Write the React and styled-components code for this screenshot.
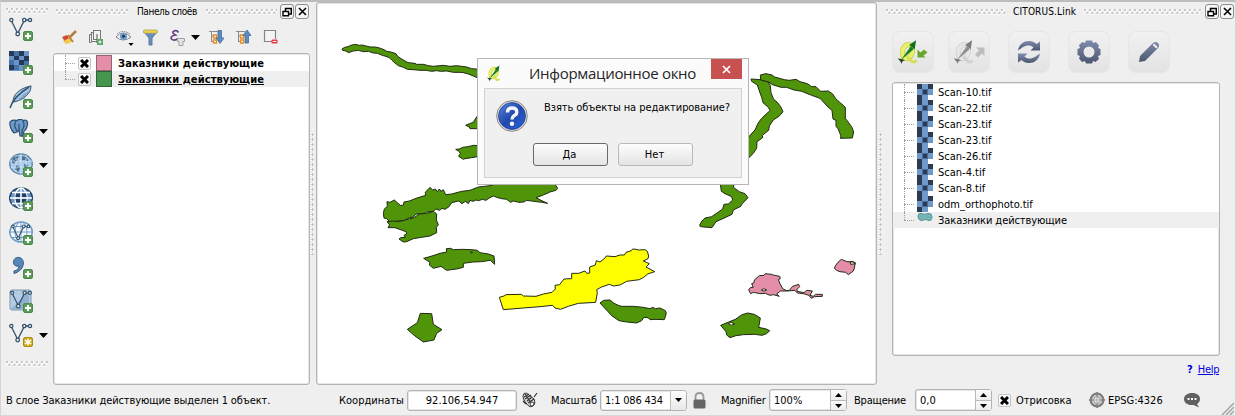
import React from "react";
import styled, { createGlobalStyle, css } from "styled-components";

const GlobalStyle = createGlobalStyle`
  * { box-sizing: border-box; }
  body { margin: 0; }
`;

/* ---------- primitives ---------- */

const Text = styled.span`
  font-size: ${(p) => p.$size || 11}px;
  font-weight: ${(p) => (p.$bold ? 700 : 400)};
  letter-spacing: ${(p) => p.$track || 0}px;
  text-decoration: ${(p) => (p.$underline ? "underline" : "none")};
  line-height: 16px;
  white-space: nowrap;
`;

const Grip = styled.div`
  flex: none;
  ${(p) =>
    p.$vertical
      ? css`
          width: 5px;
          height: ${p.$length}px;
          background-image: radial-gradient(circle at 1.5px 1.5px, #c2c2c2 1.1px, #fff 1.3px 1.9px, transparent 2px);
          background-size: 5px 5px;
        `
      : css`
          width: ${p.$length}px;
          height: 6px;
          background-image: radial-gradient(circle at 1px 1px, #c6c6c6 1px, #fff 1.2px 1.8px, transparent 2px),
            radial-gradient(circle at 1px 1px, #c6c6c6 1px, #fff 1.2px 1.8px, transparent 2px);
          background-size: 5px 6px;
          background-position: 0 0, 2.5px 3px;
        `}
`;

const Box = styled.div`
  background: #fff;
  border: 1px solid #b4b4b4;
  border-radius: 3px;
  box-shadow: inset 0 0 0 0.5px #cfcfcf;
`;

const Check = styled.span`
  display: grid;
  place-items: center;
  width: 13px;
  height: 13px;
  flex: none;
  background: linear-gradient(#fff, #f4f4f4);
  border: 1px solid #c3c3c3;
  border-radius: 2px;
`;

/* ---------- page ---------- */

const Window = styled.div`
  position: relative;
  display: flex;
  flex-direction: column;
  width: 1236px;
  height: 416px;
  overflow: hidden;
  background: #efefef;
  border-top: 2px solid #bdbdbd;
  border-left: 1px solid #d4d4d4;
  border-right: 1px solid #d4d4d4;
  border-bottom: 1px solid #d8d8d8;
  color: #000;
  font-family: "DejaVu Sans Condensed", "DejaVu Sans", sans-serif;
`;

const Workspace = styled.div`
  display: flex;
  height: 383px;
  flex: none;
`;

const SideBar = styled.div`
  width: 52px;
  padding: 6px 0 0 5px;
`;

const SideItem = styled.div`
  display: flex;
  align-items: center;
  height: 34px;
  padding-left: 3px;
  gap: 5px;
`;

const SideTools = styled.div`
  margin: -2px 0 9px;
`;

const LayersPanel = styled.div`
  display: flex;
  flex-direction: column;
  width: 257px;
`;

const PanelTitle = styled.div`
  display: flex;
  align-items: center;
  height: 19px;
  padding-left: ${(p) => p.$left}px;
`;

const TitleText = styled(Text)`
  width: ${(p) => p.$width}px;
  margin: 0 ${(p) => p.$gap}px;
  padding-top: 1px;
`;

const TitleButton = styled.div`
  display: grid;
  place-items: center;
  width: 14px;
  height: 15px;
  margin-left: ${(p) => p.$gap}px;
  border: 1px solid #8d8d8d;
  border-radius: 3px;
  background: #f6f6f6;
`;

const LayerTools = styled.div`
  display: flex;
  align-items: center;
  height: 32px;
  padding: 3px 0 0 9px;
`;

const ToolSlot = styled.div`
  width: ${(p) => p.$width || 27}px;
  height: 20px;
  flex: none;
`;

const LayerList = styled(Box)`
  flex: 1;
  padding-top: 1px;
`;

const LayerRow = styled.div`
  display: flex;
  align-items: center;
  height: 16px;
  background: ${(p) => (p.$active ? "#efefef" : "#fff")};
`;

const RowText = styled(Text)`
  padding-top: 2px;
`;

const Branch = styled.span`
  position: relative;
  width: ${(p) => p.$width}px;
  height: 16px;
  margin: 0 3px 0 ${(p) => p.$left}px;
  &::before {
    content: "";
    position: absolute;
    inset: 0 auto ${(p) => (p.$last ? "8px" : "0")} 0;
    border-left: 1px dotted #a0a0a0;
  }
  &::after {
    content: "";
    position: absolute;
    left: 0;
    top: 8px;
    width: ${(p) => p.$width}px;
    border-top: 1px dotted #a0a0a0;
  }
`;

const Swatch = styled.span`
  width: 16px;
  height: 16px;
  margin: 0 6px 0 5px;
  background: ${(p) => p.$color};
  border: 1px solid ${(p) => p.$edge};
`;

const Splitter = styled.div`
  display: flex;
  align-items: center;
  justify-content: center;
  width: ${(p) => p.$width}px;
`;

const MapFrame = styled(Box)`
  width: 561px;
  height: 383px;
  overflow: hidden;
`;

const LinkPanel = styled.div`
  display: flex;
  flex-direction: column;
  flex: 1;
`;

const LinkButtons = styled.div`
  display: flex;
  gap: 18px;
  padding: 10px 0 9px 7px;
`;

const LinkButton = styled.div`
  display: grid;
  place-items: center;
  width: 42px;
  height: 42px;
  margin-right: ${(p) => (p.$tight ? -4 : 0)}px;
  border: 1px solid #e6e6e6;
  border-radius: 8px;
  background: linear-gradient(#f1f1f1, #e3e3e3);
`;

const FileList = styled(Box)`
  width: 328px;
  height: 274px;
  margin-left: 7px;
  padding-top: 1px;
`;

const FileRow = styled.div`
  display: flex;
  align-items: center;
  height: 16px;
  background: ${(p) => (p.$active ? "#efefef" : "#fff")};
`;

const FileIcon = styled.span`
  width: 16px;
  height: 16px;
  margin-right: 5px;
`;

const HelpLine = styled.div`
  display: flex;
  gap: 5px;
  padding: 6px 0 0 302px;
  color: #0000e6;
`;

/* ---------- status bar ---------- */

const StatusBar = styled.div`
  display: flex;
  align-items: center;
  height: 30px;
  padding-left: 5px;
`;

const StatusText = styled(Text)`
  width: ${(p) => p.$width}px;
  padding-top: 1px;
  flex: none;
`;

const Field = styled(Box)`
  display: flex;
  align-items: center;
  justify-content: ${(p) => (p.$center ? "center" : "flex-start")};
  width: ${(p) => p.$width}px;
  height: ${(p) => p.$height || 21}px;
  margin-right: ${(p) => p.$after}px;
  padding-left: ${(p) => (p.$center ? 0 : 4)}px;
  flex: none;
`;

const FieldValue = styled(Text)`
  flex: ${(p) => (p.$grow ? 1 : "none")};
  padding-top: 2px;
`;

const DropButton = styled.span`
  display: grid;
  place-items: center;
  width: 16px;
  height: 19px;
  border-left: 1px solid #bdbdbd;
  background: linear-gradient(#fdfdfd, #e9e9e9);
  border-radius: 0 2px 2px 0;
`;

const Stepper = styled.span`
  display: grid;
  grid-template-rows: 1fr 1fr;
  width: 16px;
  height: 20px;
  border-left: 1px solid #b8b8b8;
`;

const Step = styled.span`
  display: grid;
  place-items: center;
  background: linear-gradient(#fbfbfb, #ececec);
  & + & {
    border-top: 1px solid #b8b8b8;
  }
`;

const StatusIcon = styled.span`
  display: flex;
  width: ${(p) => p.$width}px;
  flex: none;
`;

const SizeGrip = styled.div`
  align-self: flex-end;
  display: flex;
  margin: 0 0 0 20px;
`;

/* ---------- dialog ---------- */

const Dialog = styled.div`
  position: absolute;
  left: 476px;
  top: 56px;
  width: 272px;
  height: 127px;
  padding: 0 6px;
  background: #fbfbfb;
  border: 1px solid #b6b6b6;
`;

const DialogHead = styled.div`
  display: flex;
  align-items: flex-start;
  height: 29px;
  padding-left: 4px;
`;

const DialogTitle = styled.span`
  width: 182px;
  margin: 4px 0 0 26px;
  color: #262626;
  font: 15px/20px "Open Sans", "Noto Sans", sans-serif;
  letter-spacing: -0.3px;
  white-space: nowrap;
`;

const DialogIcon = styled.span`
  width: 15px;
  margin-top: 6px;
`;

const CloseButton = styled.span`
  display: grid;
  place-items: center;
  width: 31px;
  height: 20px;
  background: #c75050;
`;

const DialogBody = styled.div`
  display: grid;
  grid-template-columns: 32px 1fr;
  grid-template-rows: 43px 24px;
  column-gap: 16px;
  height: 90px;
  padding: 11px 11px 0;
  background: #f0f0f0;
  border: 1px solid #d2d2d2;
`;

const DialogButtons = styled.div`
  grid-column: 1 / 3;
  display: flex;
  gap: 10px;
  padding-left: 37px;
`;

const PushButton = styled.span`
  display: grid;
  place-items: center;
  width: 75px;
  height: 23px;
  padding: 1px 2px 0 0;
  border: 1px solid ${(p) => (p.$default ? "#6a6a6a" : "#b9b9b9")};
  border-radius: 3px;
  background: linear-gradient(#fdfdfd, #e4e4e4);
`;

/* ---------- icons ---------- */

const Arrow = ({ up, w = 9, h = 5 }) => (
  <svg width={w} height={h} viewBox="0 0 10 6" preserveAspectRatio="none">
    <path d={up ? "M0 6L5 0L10 6Z" : "M0 0L5 6L10 0Z"} fill="#000" />
  </svg>
);

const Cross = () => (
  <svg width="9" height="9" viewBox="0 0 9 9">
    <path d="M1 1L8 8M8 1L1 8" stroke="#000" strokeWidth="3" />
  </svg>
);

const Plus = () => (
  <g>
    <rect x="14.5" y="14.5" width="9" height="9" rx="1.5" fill="#5c9c58" stroke="#4a8a4b" />
    <path d="M19 16v6M16 19h6" stroke="#fff" strokeWidth="2" />
  </g>
);

const Nodes = () => (
  <g fill="#f2f5f8" stroke="#34526b" strokeWidth="1.3">
    <path d="M2.5 4L8.7 16.5L15.5 3H21" fill="none" />
    <circle cx="2.3" cy="3" r="1.6" />
    <circle cx="8.7" cy="17" r="1.8" />
    <circle cx="15.3" cy="3" r="1.7" />
    <circle cx="21" cy="3" r="1.6" />
  </g>
);

const sideIcons = {
  vector: <Nodes />,
  raster: (
    <g>
      <rect width="20" height="20" fill="#6b95c8" />
      <path d="M0 0h5v5H0zM10 0h5v5h-5zM5 5h5v4H5zM15 5h5v5h-5zM10 9h5v5h-5zM0 14h5v5H0z" fill="#223a58" />
      <path d="M5 0h5v5H5zM0 9h5v5H0zM5 14h5v5H5zM15 10h5v5h-5z" fill="#4672a8" />
    </g>
  ),
  feather: (
    <g stroke="#34566f" strokeWidth="1">
      <path d="M4 17C4 10 9 4 22 .8C22 6 20 8 17 11C14 14 9 16 5 17Z" fill="#a5c5e5" />
      <path d="M1 23C3 16 9 9 20 2" fill="none" strokeWidth="1.5" />
      <path d="M10 14l8-4M13 11l7-4M8 16l8-3" fill="none" stroke="#5d87ad" strokeWidth=".7" />
    </g>
  ),
  elephant: (
    <g stroke="#2c4f70" strokeWidth="1.2" strokeLinejoin="round">
      <path d="M1 3C3 0 6 1 8 1.5C10 0 13 .5 14.5 1.5C17 .5 19 2 18.500 5C18 9 17 11 15 12L14 17H11L10 11L8 13L5 14C2 11 .3 6 1 3Z" fill="#6d9bc9" />
      <path d="M7 2C5 5 6 9 8 12M14 2C16 5 15 9 13 11V18M10 5v6" fill="none" />
    </g>
  ),
  earth: (
    <g>
      <ellipse cx="12" cy="11" rx="11.300" ry="10" fill="#a9cbe9" stroke="#5f87ae" strokeWidth="1.300" />
      <path d="M4 5l4-2 2 1-2 2 1 2-3 1-1 2-2-2zM13 3l4 1 3 4-3 0-1-1-3 1zM7 12l3 1 1 3-2 3-3-3zM15 11l4 1-1 3-3-1z" fill="#4d6f8e" />
      <path d="M1 8h22M2 14h20M12 1v20M7 2v18M17 2v18" stroke="#e4f0fa" strokeWidth=".8" strokeDasharray="2 1" />
    </g>
  ),
  globe: (
    <g fill="none">
      <ellipse cx="12" cy="11" rx="11.300" ry="10" fill="#6896c8" stroke="#284868" strokeWidth="1.600" />
      <path d="M3 5.500h18M1 11h22M3 16.500h18M12 1v20" stroke="#fff" strokeWidth="1.300" />
      <ellipse cx="12" cy="11" rx="6" ry="10" stroke="#fff" strokeWidth="1.300" />
      <path d="M7 6.500h4V10H6.300zM13 6.500h4l.7 3.500H13zM6.500 12H11v3.500H7.300zM13 12h4.500l-.8 3.500H13z" fill="#243f60" />
    </g>
  ),
  wfs: (
    <g>
      <g fill="#f4f8fb" stroke="#6d9cc8" strokeWidth="1">
        <ellipse cx="12" cy="11" rx="11.300" ry="10" strokeWidth="1.500" />
        <ellipse cx="12" cy="11" rx="6" ry="10" />
        <path d="M1 11h22M3 5.500h18M3 16.500h18M12 1v20" fill="none" />
      </g>
      <g transform="translate(2 3) scale(.83)"><Nodes /></g>
    </g>
  ),
  comma: (
    <path d="M5 16C9 15 10 13 10 11C6 12 4 9 4.500 6.500C5 3 8 2 10 2.500C14 3 15 7 14 10.500C13 14 10 17 5 18.500Z" fill="#5787b8" stroke="#31557a" />
  ),
  vfile: (
    <g>
      <rect x="1" y="1" width="21" height="20" rx="2" fill="#b5cde4" stroke="#7f98b0" />
      <path d="M2 20L20 2V20Z" fill="#8fb0d0" />
      <g transform="translate(1 1) scale(.95)"><Nodes /></g>
    </g>
  ),
  vnew: <Nodes />,
};

const NewBadge = () => (
  <g>
    <rect x="14.500" y="14.500" width="9" height="9" rx="1.500" fill="#d3ab16" stroke="#ab8a16" />
    <path d="M19 15.500v7M15.800 17.200l6.400 3.600M22.200 17.200l-6.400 3.600" stroke="#fff" strokeWidth="1.500" />
  </g>
);

const SideIcon = ({ name }) => (
  <svg width="25" height="24" viewBox="0 0 25 24">
    {sideIcons[name]}
    {name === "vnew" ? <NewBadge /> : <Plus />}
  </svg>
);

const layerIcons = {
  style: (
    <g>
      <path d="M1 9L7 6L10 12L5 15Q1 14 1 9Z" fill="#efc05f" />
      <path d="M0 8L5 6L7 10L3 12Z" fill="#d6423c" />
      <path d="M3 11L8 9L9 13L5 15Z" fill="#f0cf45" />
      <path d="M8 8L14 2" stroke="#b67d41" strokeWidth="2.500" />
      <path d="M6 6l5 7" stroke="#b88542" strokeWidth="2" />
    </g>
  ),
  group: (
    <g fill="#f2f2f2" stroke="#777" strokeWidth="1">
      <path d="M2.500 13.500H.5V5.500h3M4.500 11.500h-2" fill="none" />
      <rect x="2.500" y="3.500" width="8" height="9" />
      <rect x="4.500" y="1.500" width="7" height="9" />
      <path d="M8 5V14" stroke="#555" />
      <rect x="8.500" y="10.500" width="5" height="5" fill="#5ea568" stroke="#5ea568" />
      <path d="M11 11.500v3M9.500 13h3" stroke="#fff" />
    </g>
  ),
  eye: (
    <g>
      <path d="M0 8Q7 0 15 8Q7 14 0 8Z" fill="#f5f5f5" stroke="#888" />
      <circle cx="7.500" cy="7.300" r="3.600" fill="#6c9bcc" />
      <circle cx="7.500" cy="7.300" r="1.500" fill="#1f3550" />
      <path d="M1 5Q7 0 14 5" fill="none" stroke="#777" strokeDasharray="1.500 1" />
      <path d="M12.500 14h5l-2.500 3z" />
    </g>
  ),
  filter: (
    <g>
      <path d="M1 3H14L9 9V16H6V9Z" fill="#688fbf" stroke="#5a7ba3" />
      <rect x=".5" y="1" width="14" height="3.200" rx="1" fill="#ecd34a" stroke="#a59b5c" strokeWidth=".7" />
    </g>
  ),
  epsilon: (
    <g>
      <path d="M8.500 3.500Q7 1 4 2Q1 3.500 5.500 6Q0 7 1.500 10Q4 12.500 8.500 9.500" fill="none" stroke="#68427f" strokeWidth="1.700" />
      <path d="M7.500 9.500h7v3h-1.500v4h-4v-4H7.500z" fill="#e4e4e4" stroke="#a0a0a0" />
    </g>
  ),
  expand: (
    <g>
      <path d="M0 2.500h9M2.500 3v10M2.500 7h3M2.500 12.500h3" fill="none" stroke="#8b8b8b" />
      <path d="M4.500 6h3v3h-3zM4.500 11h3v3h-3z" fill="#fff" stroke="#e98c22" strokeWidth="1.300" />
      <path d="M9 1.500h3.500V9h2.500L11 14.500L7 9h2z" fill="#5d8bc0" stroke="#436d9c" strokeWidth=".8" />
    </g>
  ),
  collapse: (
    <g>
      <path d="M0 2.500h9M2.500 3v10M2.500 7h3M2.500 12.500h3" fill="none" stroke="#8b8b8b" />
      <path d="M4.500 6h3v3h-3zM4.500 11h3v3h-3z" fill="#fff" stroke="#e98c22" strokeWidth="1.300" />
      <path d="M9 14h3.500V6.500h2.500L11 1L7 6.500h2z" fill="#5d8bc0" stroke="#436d9c" strokeWidth=".8" />
    </g>
  ),
  remove: (
    <g>
      <path d="M10 12.500H1.500V1.500H12.500V10" fill="#f4f4f4" stroke="#858585" strokeWidth="1.200" />
      <rect x="8.500" y="10.500" width="6" height="4" rx="1" fill="#e63946" />
      <path d="M9.800 12.500h3.500" stroke="#fff" />
    </g>
  ),
  arrow: <path d="M0 6h9l-4.500 5z" />,
};

const LayerTool = ({ name, width }) => (
  <ToolSlot $width={width}>
    <svg width="19" height="20" viewBox="0 0 19 20">{layerIcons[name]}</svg>
  </ToolSlot>
);

const FloatGlyph = () => (
  <svg width="10" height="10" viewBox="0 0 10 10">
    <path d="M3 1.500h6.300V7H7M3.500 1v3" fill="none" stroke="#000" strokeWidth="1.500" />
    <path d="M1 4.500h5.500v4.200H1z" fill="#fff" stroke="#000" strokeWidth="1.400" />
  </svg>
);

const CloseGlyph = () => (
  <svg width="9" height="9" viewBox="0 0 9 9">
    <path d="M1 1L8 8M8 1L1 8" stroke="#000" strokeWidth="1.600" />
  </svg>
);

const QMark = ({ gray, size }) => (
  <svg width={size} height={size} viewBox="0 0 24 24" overflow="visible">
    <g fill="none" transform="rotate(14 9.500 12.500)">
      <ellipse cx="9.500" cy="12" rx="5.600" ry="8" stroke={gray ? "#cfcfcf" : "#c3cf45"} strokeWidth="6" />
      <ellipse cx="9.500" cy="12" rx="5.600" ry="8" stroke={gray ? "#e6e6e6" : "#e9f06c"} strokeWidth="4.400" />
    </g>
    <path d="M9 18Q12 19 14 23Q17 25.500 20 22" fill="none" stroke={gray ? "#d2d2d2" : "#d6e056"} strokeWidth="3.400" />
    <path d="M2 22L13.500 6L17 9Z" fill={gray ? "#8f8f8f" : "#17801f"} />
    <path d="M19.500 -1L11.500 4.500L18 9.500Z" fill={gray ? "#7c7c7c" : "#126f1b"} />
    <path d="M-1.500 20L3 20.500L7 22L4 23L3 26L1.500 23Z" fill={gray ? "#777" : "#24422a"} />
  </svg>
);

const QgisIcon = ({ gray }) => (
  <svg width="40" height="40" viewBox="0 0 40 40">
    <g transform="translate(6 9)"><QMark gray={gray} size={21} /></g>
    {gray ? (
      <path d="M27 15.500H35.500V24L33 21.500L29 25.500L26 22.500L30 18.500Z" fill="#bdbdbd" />
    ) : (
      <path d="M24.500 17.500V25.500H32.500L30.500 23.500L34.500 20.500L31 17.500L27.500 20.500Z" fill="#69a52a" />
    )}
  </svg>
);

const Metal = ({ id }) => (
  <linearGradient id={id} x1="0" y1="0" x2="0" y2="1">
    <stop offset="0" stopColor="#7f8bad" />
    <stop offset="1" stopColor="#4c5670" />
  </linearGradient>
);

const SyncIcon = () => (
  <svg width="26" height="24" viewBox="0 0 26 24">
    <defs><Metal id="sync" /></defs>
    <g fill="url(#sync)">
      <path d="M2 10.500C3 4 8 1 13 1C17 1 19 2.500 20.500 4L24 1.500V10.500H14.500L17.500 7.500C16 6 14.500 5.500 12.500 5.500C8 5.500 6 8 2 10.500Z" />
      <path d="M24 13.500C23 20 18 23 13 23C9 23 7 21.500 5.500 20L2 22.500V13.500H11.500L8.500 16.500C10 18 11.500 18.500 13.500 18.500C18 18.500 20 16 24 13.500Z" />
    </g>
  </svg>
);

const GearIcon = () => (
  <svg width="24" height="24" viewBox="-12 -12 24 24">
    <defs><Metal id="gear" /></defs>
    <path
      fillRule="evenodd"
      fill="url(#gear)"
      d="M-3 -11.500H3L4 -9L7 -10L10 -6.500L9 -4L11.500 -3V3L9 4L10 7L6.500 10L4 9L3 11.500H-3L-4 9L-7 10L-10 6.500L-9 4L-11.500 3V-3L-9 -4L-10 -7L-6.500 -10L-4 -9ZM0 -5.500A5.500 5.500 0 1 0 0 5.500A5.500 5.500 0 1 0 0 -5.500Z"
    />
  </svg>
);

const PencilIcon = () => (
  <svg width="22" height="22" viewBox="0 0 22 22">
    <defs><Metal id="pencil" /></defs>
    <path d="M1 21L2 15L15 2Q17.500 0 20 2Q22 4.500 20 7L7 20Z" fill="url(#pencil)" />
    <path d="M16 3.800L18.300 6.100" stroke="#e9e9e9" strokeWidth="2.200" strokeLinecap="round" />
  </svg>
);

const RasterTile = () => (
  <svg width="16" height="16" viewBox="0 0 16 16" shapeRendering="crispEdges">
    <path d="M0 0h11v5h5v6h-5v5H0z" fill="#6f98cb" />
    <path d="M0 0h5v5H0zM11 0h5v5h-5zM6 6h4v4H6zM0 11h5v5H0z" fill="#2b3c50" />
    <path d="M5 5h6v1H5zM5 5h1v6H5zM10 5h1v6h-1zM5 10h6v1H5z" fill="#4b6b96" />
  </svg>
);

const PolygonTile = () => (
  <svg width="16" height="16" viewBox="0 0 16 16">
    <path d="M1 4Q1 1 4.500 1.500Q8 3 11 1.500Q15 1 15 4.500Q15 9 12 8.500Q8 6.500 5 8.500Q1 8.500 1 4Z" fill="#72b3b3" stroke="#5a9696" />
  </svg>
);

const QuestionIcon = () => (
  <svg width="32" height="32" viewBox="0 0 32 32">
    <defs>
      <linearGradient id="ball" x1="0" y1="0" x2="1" y2="1">
        <stop offset="0" stopColor="#5b86d8" />
        <stop offset=".5" stopColor="#2148ae" />
        <stop offset="1" stopColor="#2f63dc" />
      </linearGradient>
    </defs>
    <circle cx="16" cy="16" r="15.300" fill="#e8e8e8" stroke="#838383" />
    <circle cx="16" cy="16" r="13.500" fill="url(#ball)" stroke="#203f86" strokeWidth=".8" />
    <path d="M11.500 12.500Q11.500 8 16 8Q20.800 8 20.800 12Q20.800 14.500 18 15.800Q16 17 16 19.500" fill="none" stroke="#f4f4f4" strokeWidth="3.400" />
    <circle cx="16" cy="23.800" r="2.200" fill="#f4f4f4" />
  </svg>
);

const MouseIcon = () => (
  <svg width="16" height="17" viewBox="0 0 16 17" fill="none" stroke="#333">
    <path d="M2 1.500Q5 0 7 3L12 7Q14 12 11 14Q8 16 5.500 13L2 8Q0 4 2 1.500Z" fill="#ddd" />
    <path d="M2 5l5-3M3 7l6-4M5 9l5-4M6 11l6-4M3 2l6 9M1 9l3 3M12 5l3-4" strokeWidth="1.200" />
    <circle cx="10" cy="12" r="2" fill="#fff" />
  </svg>
);

const LockIcon = () => (
  <svg width="13" height="17" viewBox="0 0 13 17">
    <path d="M2.500 8V5Q2.500 1 6.500 1Q10.500 1 10.500 5V8" fill="none" stroke="#999" strokeWidth="1.800" />
    <rect x=".5" y="7.500" width="12" height="9" rx="1.500" fill="#666" />
  </svg>
);

const CrsIcon = () => (
  <svg width="16" height="16" viewBox="0 0 16 16" fill="none" stroke="#808080">
    <circle cx="8" cy="8" r="6.300" strokeWidth="2.400" />
    <circle cx="8" cy="8" r="3.500" fill="#eee" strokeWidth="1" />
    <path d="M8 0v4M8 12v4M0 8h4M12 8h4" strokeWidth="1.500" />
    <path d="M8 4v8M4 8h8" stroke="#aaa" />
  </svg>
);

const BubbleIcon = () => (
  <svg width="17" height="16" viewBox="0 0 17 16">
    <path d="M8 1C13 1 16 3.500 16 7C16 9.500 14.500 11 13 12L15 15.500L9.500 13C4 13.500 0 11 0 7C0 3.500 3.500 1 8 1Z" fill="#606060" />
    <path d="M3.500 6h2v2h-2zM7 6h2v2H7zM10.500 6h2v2h-2z" fill="#fff" />
  </svg>
);

/* ---------- map ---------- */

const GREEN = "#4f9409";
const PINK = "#e38da8";

/* Outlines are digitised at three units per pixel from a local origin. */
const regions = [
  { at: [320, 30], fill: GREEN, d: "M66 57L74 52L84 50L92 46L106 43L118 46L126 45L150 51L166 51L182 55L194 60L200 64L212 66L228 71L232 78L240 84L250 90L264 98L285 100L290 103L310 103L325 107L340 109L370 106L390 109L410 107L425 109L440 111L455 116L500 120V150L472 143L460 138L445 132L430 128L420 127L400 127L380 123L362 124L350 122L335 124L318 121L300 121L280 119L262 118L250 112L235 107L225 99L216 91L208 83L198 79L190 77L172 70L160 69L145 64L130 65L115 61L100 63L85 68L78 63L68 61Z" },
  { at: [320, 30], fill: GREEN, d: "M437 286L448 281L460 277L465 268L472 258L520 240V296H450L448 291Z" },
  { at: [320, 30], fill: GREEN, d: "M407 358L418 357L428 352L444 350L460 346L520 350V374L472 380L455 383L435 386L430 388L423 383L418 381L416 378L421 371L417 364Z" },
  { at: [380, 170], fill: GREEN, d: "M10 130L13 117L22 109L21 95L30 97L43 90L52 98L61 106H70L72 96L88 93L108 85L137 76L136 67L150 52L158 60L166 57L172 65L178 57L183 64L190 59L197 74L215 72L245 64L270 61L295 51L330 47L355 40L500 38L526 44L533 55L528 61L510 66L490 75L468 83L483 91L503 100L485 97L462 94L440 91L432 96L417 97L400 93L392 97L380 88L365 86L350 82L340 78L328 84L318 91L307 88L296 92L288 90L279 94L270 91L265 101L256 94L246 101L236 93L215 98L207 110L195 118L186 115L179 121L167 117L160 124L140 126L132 132L108 132L100 141L83 145L73 152L60 152L40 156L28 154L20 146L12 144Z" },
  { at: [380, 170], fill: GREEN, d: "M21 155L40 153L58 155L76 150L102 143L118 132L140 130L160 124L170 132L169 150L175 164L169 172L170 188L150 198L125 202L100 206L80 215L70 216L57 207L62 203L76 202L72 196L80 192L78 185L64 180L45 173L24 173L29 165Z" },
  { at: [380, 170], fill: GREEN, d: "M131 265L156 258L180 250L200 246L199 236L212 235L220 239L245 238L275 239L292 241L300 248L325 252L342 258L344 283L331 271L305 275L280 276L250 280V292L230 297L200 301L183 289L160 295L148 285L150 277Z M271 246h6l-2 4Z" },
  { at: [380, 170], fill: GREEN, d: "M121 430L155 431L160 463L186 479L170 490L162 510L130 516L105 498L82 478L112 458Z" },
  { at: [490, 230], fill: "#ffff00", d: "M28 202L42 198L48 194L94 193L100 198L138 199L160 192L186 187L196 177L195 166L209 164L222 147L245 146V130L266 130L285 123L290 130L299 129V111L316 105L319 92L330 96L345 84L349 78L375 80L390 75H403L408 67L424 62L428 57L438 58L446 60L465 59L472 64L476 78L474 86L460 93L478 101L468 111L494 125L473 132L461 142L448 149L410 154L390 165L371 168L358 163L335 171L320 179L322 188L317 217L285 219L265 220L235 229L211 238L195 234L188 226L150 230L100 234L40 239Z" },
  { at: [490, 230], fill: GREEN, d: "M330 219L341 211L360 210L372 220L385 226L395 229L430 229L460 232L480 236L488 232L496 236L510 234L526 242L529 250L523 269L495 268L480 269L474 263L462 262L455 272L440 279L410 276L387 272L365 257L354 245Z" },
  { at: [690, 60], fill: GREEN, d: "M183 57L211 59L235 66L241 77L243 98L251 118L262 127L272 140L279 155L268 168L250 180L238 198L236 211L217 226L218 233L201 245L200 265L190 280L170 300L140 280L181 225L195 210L204 190L214 176L231 160L240 152L235 142L219 128L215 112L207 90L202 75L185 64Z" },
  { at: [690, 60], fill: GREEN, d: "M211 45L228 41L246 45L254 51L283 59L298 61L318 58L330 65L352 71L365 80L378 80L392 94L415 93L428 102L437 116L466 142L466 175L485 200L491 216L487 234L451 235L453 228L444 206L438 199V181L429 177L426 151L414 141L390 115L365 106L335 94L312 90L290 82L273 82L247 74L236 66L212 60Z" },
  { at: [690, 60], fill: GREEN, d: "M90 365L134 365L130 382L148 395L165 401L174 413L158 430L152 439L130 450L126 463L105 473L78 485L66 503L31 500L29 495L36 483L45 474L65 470L84 457L98 447L102 433L115 432L128 420L125 410L105 401L94 394Z" },
  { at: [700, 240], fill: PINK, d: "M146 150L151 143L160 142L155 131L162 128L163 120L178 107L192 106L196 101L214 103L223 106L239 109L241 116L235 119L240 131L248 146L260 152L268 151L278 139L296 133L299 140L291 148L292 154L312 158L320 151L337 153L330 166L340 169L346 163L367 163V169L344 170L334 175L327 166L310 161L292 159L285 151L262 153L241 153L230 162L238 169L220 164L210 166L196 160L180 161L160 157L152 161Z M184 150Q190 142 200 150Q193 157 184 150Z" },
  { at: [700, 240], fill: PINK, d: "M403 85L407 76L414 67L424 58L441 65L456 65L466 68L463 84L460 93L445 104L437 97L420 95L410 91Z M450 68L458 64L466 71L452 73Z" },
  { at: [700, 240], fill: GREEN, d: "M62 256L86 246L106 238L126 224L143 219L163 223L181 234L176 262L199 267L209 272L200 281L186 286L164 283L130 284L108 287L90 293L80 285L78 275Z M85 251Q93 243 104 252Q93 260 85 251Z" },
];

const MapCanvas = () => (
  <svg width="559" height="381" viewBox="317 3 559 381">
    {regions.map((r, i) => (
      <path
        key={i}
        d={r.d}
        transform={`translate(${r.at[0]} ${r.at[1]}) scale(.33333)`}
        fill={r.fill}
        fillRule="evenodd"
        stroke="#202a14"
        strokeWidth="3"
        strokeLinejoin="round"
      />
    ))}
  </svg>
);

/* ---------- content ---------- */

const tools = [
  ["vector"], ["raster"], ["feather"], ["elephant", true], ["earth", true],
  ["globe"], ["wfs", true], ["comma"], ["vfile"], ["vnew", true],
];

const files = ["Scan-10.tif", "Scan-22.tif", "Scan-23.tif", "Scan-23.tif", "Scan-26.tif", "Scan-4.tif", "Scan-8.tif", "odm_orthophoto.tif"];

const WindowButtons = () => (
  <>
    <TitleButton $gap={3}><FloatGlyph /></TitleButton>
    <TitleButton $gap={1}><CloseGlyph /></TitleButton>
  </>
);

const Spin = ({ value, width, after }) => (
  <Field $width={width} $height={22} $after={after}>
    <FieldValue $grow>{value}</FieldValue>
    <Stepper>
      <Step><Arrow up w={7} h={4} /></Step>
      <Step><Arrow w={7} h={4} /></Step>
    </Stepper>
  </Field>
);

export default function App() {
  return (
    <Window>
      <GlobalStyle />
      <Workspace>
        <SideBar>
          <Grip $length={42} />
          <SideTools>
            {tools.map(([name, menu]) => (
              <SideItem key={name}>
                <SideIcon name={name} />
                {menu && <Arrow />}
              </SideItem>
            ))}
          </SideTools>
          <Grip $length={42} />
        </SideBar>

        <LayersPanel>
          <PanelTitle $left={3}>
            <Grip $length={72} />
            <TitleText $size={10} $track={-0.4} $width={60} $gap={9}>Панель слоёв</TitleText>
            <Grip $length={71} />
            <WindowButtons />
          </PanelTitle>
          <LayerTools>
            <LayerTool name="style" />
            <LayerTool name="group" />
            <LayerTool name="eye" />
            <LayerTool name="filter" />
            <LayerTool name="epsilon" width={21} />
            <LayerTool name="arrow" width={18} />
            <LayerTool name="expand" />
            <LayerTool name="collapse" />
            <LayerTool name="remove" />
          </LayerTools>
          <LayerList>
            <LayerRow>
              <Branch $left={11} $width={10} />
              <Check><Cross /></Check>
              <Swatch $color={PINK} $edge="#8f6573" />
              <RowText $bold $track={0.1}>Заказники действующие</RowText>
            </LayerRow>
            <LayerRow $active>
              <Branch $left={11} $width={10} $last />
              <Check><Cross /></Check>
              <Swatch $color="#469650" $edge="#2f6338" />
              <RowText $bold $underline $track={0.1}>Заказники действующие</RowText>
            </LayerRow>
          </LayerList>
        </LayersPanel>

        <Splitter $width={6}><Grip $vertical $length={122} /></Splitter>
        <MapFrame><MapCanvas /></MapFrame>
        <Splitter $width={8}><Grip $vertical $length={122} /></Splitter>

        <LinkPanel>
          <PanelTitle $left={1}>
            <Grip $length={120} />
            <TitleText $size={10} $track={0.15} $width={64} $gap={7}>CITORUS.Link</TitleText>
            <Grip $length={118} />
            <WindowButtons />
          </PanelTitle>
          <LinkButtons>
            <LinkButton $tight><QgisIcon /></LinkButton>
            <LinkButton><QgisIcon gray /></LinkButton>
            <LinkButton><SyncIcon /></LinkButton>
            <LinkButton><GearIcon /></LinkButton>
            <LinkButton><PencilIcon /></LinkButton>
          </LinkButtons>
          <FileList>
            {files.map((name, i) => (
              <FileRow key={i}>
                <Branch $left={11} $width={10} />
                <FileIcon><RasterTile /></FileIcon>
                <RowText>{name}</RowText>
              </FileRow>
            ))}
            <FileRow $active>
              <Branch $left={11} $width={10} $last />
              <FileIcon><PolygonTile /></FileIcon>
              <RowText $track={-0.08}>Заказники действующие</RowText>
            </FileRow>
          </FileList>
          <HelpLine>
            <Text $bold>?</Text>
            <Text $underline $track={-0.3}>Help</Text>
          </HelpLine>
        </LinkPanel>
      </Workspace>

      <StatusBar>
        <StatusText $width={333} $track={-0.1}>В слое Заказники действующие выделен 1 объект.</StatusText>
        <StatusText $width={68}>Координаты</StatusText>
        <Field $center $width={110} $after={5}><FieldValue>92.106,54.947</FieldValue></Field>
        <StatusIcon $width={29}><MouseIcon /></StatusIcon>
        <StatusText $width={49} $track={-0.15}>Масштаб</StatusText>
        <Field $width={87} $after={6}>
          <FieldValue $grow $track={-0.2}>1:1 086 434</FieldValue>
          <DropButton><Arrow w={7} h={4} /></DropButton>
        </Field>
        <StatusIcon $width={28}><LockIcon /></StatusIcon>
        <StatusText $width={48} $track={-0.2}>Magnifier</StatusText>
        <Spin value="100%" width={78} after={7} />
        <StatusText $width={61} $track={-0.2}>Вращение</StatusText>
        <Spin value="0,0" width={77} after={6} />
        <Check><Cross /></Check>
        <StatusIcon $width={5} />
        <StatusText $width={73}>Отрисовка</StatusText>
        <StatusIcon $width={19}><CrsIcon /></StatusIcon>
        <StatusText $width={76}>EPSG:4326</StatusText>
        <StatusIcon $width={17}><BubbleIcon /></StatusIcon>
        <SizeGrip>
          <svg width="13" height="13" viewBox="0 0 13 13" fill="none" stroke="#a5a5a5" strokeWidth="1.500">
            <path d="M1 13L13 1M5 13L13 5M9 13L13 9" />
          </svg>
        </SizeGrip>
      </StatusBar>

      <Dialog>
        <DialogHead>
          <DialogIcon><QMark size={14} /></DialogIcon>
          <DialogTitle>Информационное окно</DialogTitle>
          <CloseButton>
            <svg width="9" height="9" viewBox="0 0 9 9"><path d="M1 1L8 8M8 1L1 8" stroke="#fff" strokeWidth="1.700" /></svg>
          </CloseButton>
        </DialogHead>
        <DialogBody>
          <QuestionIcon />
          <Text $track={-0.07}>Взять объекты на редактирование?</Text>
          <DialogButtons>
            <PushButton $default><Text>Да</Text></PushButton>
            <PushButton><Text>Нет</Text></PushButton>
          </DialogButtons>
        </DialogBody>
      </Dialog>
    </Window>
  );
}
